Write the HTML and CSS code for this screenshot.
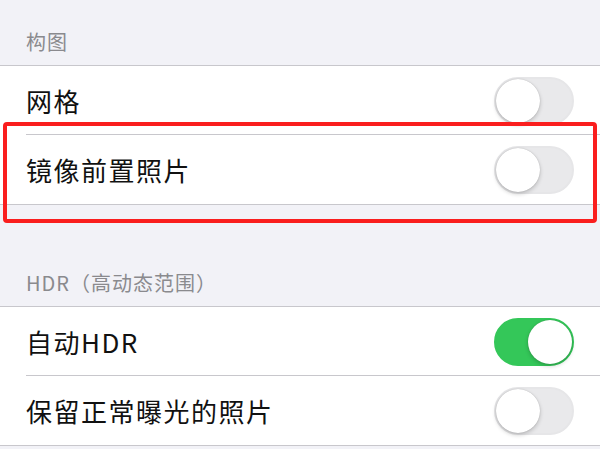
FILE: index.html
```html
<!DOCTYPE html>
<html lang="zh-CN">
  <head>
    <meta charset="UTF-8" />
    <meta name="viewport" content="width=device-width, initial-scale=1.0" />
    <title>相机设置</title>
    <link rel="stylesheet" href="styles.css">
  </head>
  <body>
    <div class="section-title first">构图</div>
    <div class="group">
      <div class="row">
        <span class="label">网格</span>
        <span class="switch"><span class="knob"></span></span>
      </div>
      <div class="row marked">
        <span class="label">镜像前置照片</span>
        <span class="switch"><span class="knob"></span></span>
        <div class="highlight"></div>
      </div>
    </div>

    <div class="section-title">HDR（高动态范围）</div>
    <div class="group">
      <div class="row">
        <span class="label">自动HDR</span>
        <span class="switch on"><span class="knob"></span></span>
      </div>
      <div class="row">
        <span class="label">保留正常曝光的照片</span>
        <span class="switch"><span class="knob"></span></span>
      </div>
    </div>
  </body>
</html>
```

FILE: styles.css
```css
body {
  margin: 0;
  background-color: #f2f2f7;
  font-family: "Noto Sans CJK SC", sans-serif;
  color: #000;
  overflow: hidden;
}

.section-title {
  height: 101px;
  box-sizing: border-box;
  display: flex;
  align-items: flex-end;
  padding: 0 26px 11px;
  font-size: 20px;
  line-height: 24px;
  letter-spacing: 1px;
  color: #8a8a8e;
}

.section-title.first {
  height: 65px;
}

.group {
  background-color: #fff;
  border-top: 1px solid #c8c7cc;
  border-bottom: 1px solid #c8c7cc;
}

.row {
  position: relative;
  height: 69px;
  display: flex;
  align-items: center;
  justify-content: space-between;
  padding: 0 26px;
}

.row + .row::before {
  content: "";
  position: absolute;
  top: -1px;
  left: 26px;
  right: 0;
  border-top: 1px solid #c8c7cc;
}

.label {
  font-size: 26px;
  letter-spacing: 1.5px;
  color: #111;
}

.switch {
  position: relative;
  width: 80px;
  height: 48px;
  box-sizing: border-box;
  border-radius: 24px;
  background-color: #e9e9eb;
  border: 2px solid #e6e6e8;
}

.switch .knob {
  position: absolute;
  top: 0;
  left: 0;
  width: 44px;
  height: 44px;
  border-radius: 50%;
  background-color: #fff;
  box-shadow: 0 2px 4px rgba(0, 0, 0, 0.2), 0 0 1px rgba(0, 0, 0, 0.25);
}

.switch.on {
  background-color: #34c759;
  border-color: #34c759;
}

.switch.on .knob {
  left: auto;
  right: 0;
}

.highlight {
  position: absolute;
  top: -13px;
  bottom: -19px;
  left: 3px;
  right: 3px;
  border: 4px solid #fa1e1e;
  border-radius: 4px;
  pointer-events: none;
}
```
